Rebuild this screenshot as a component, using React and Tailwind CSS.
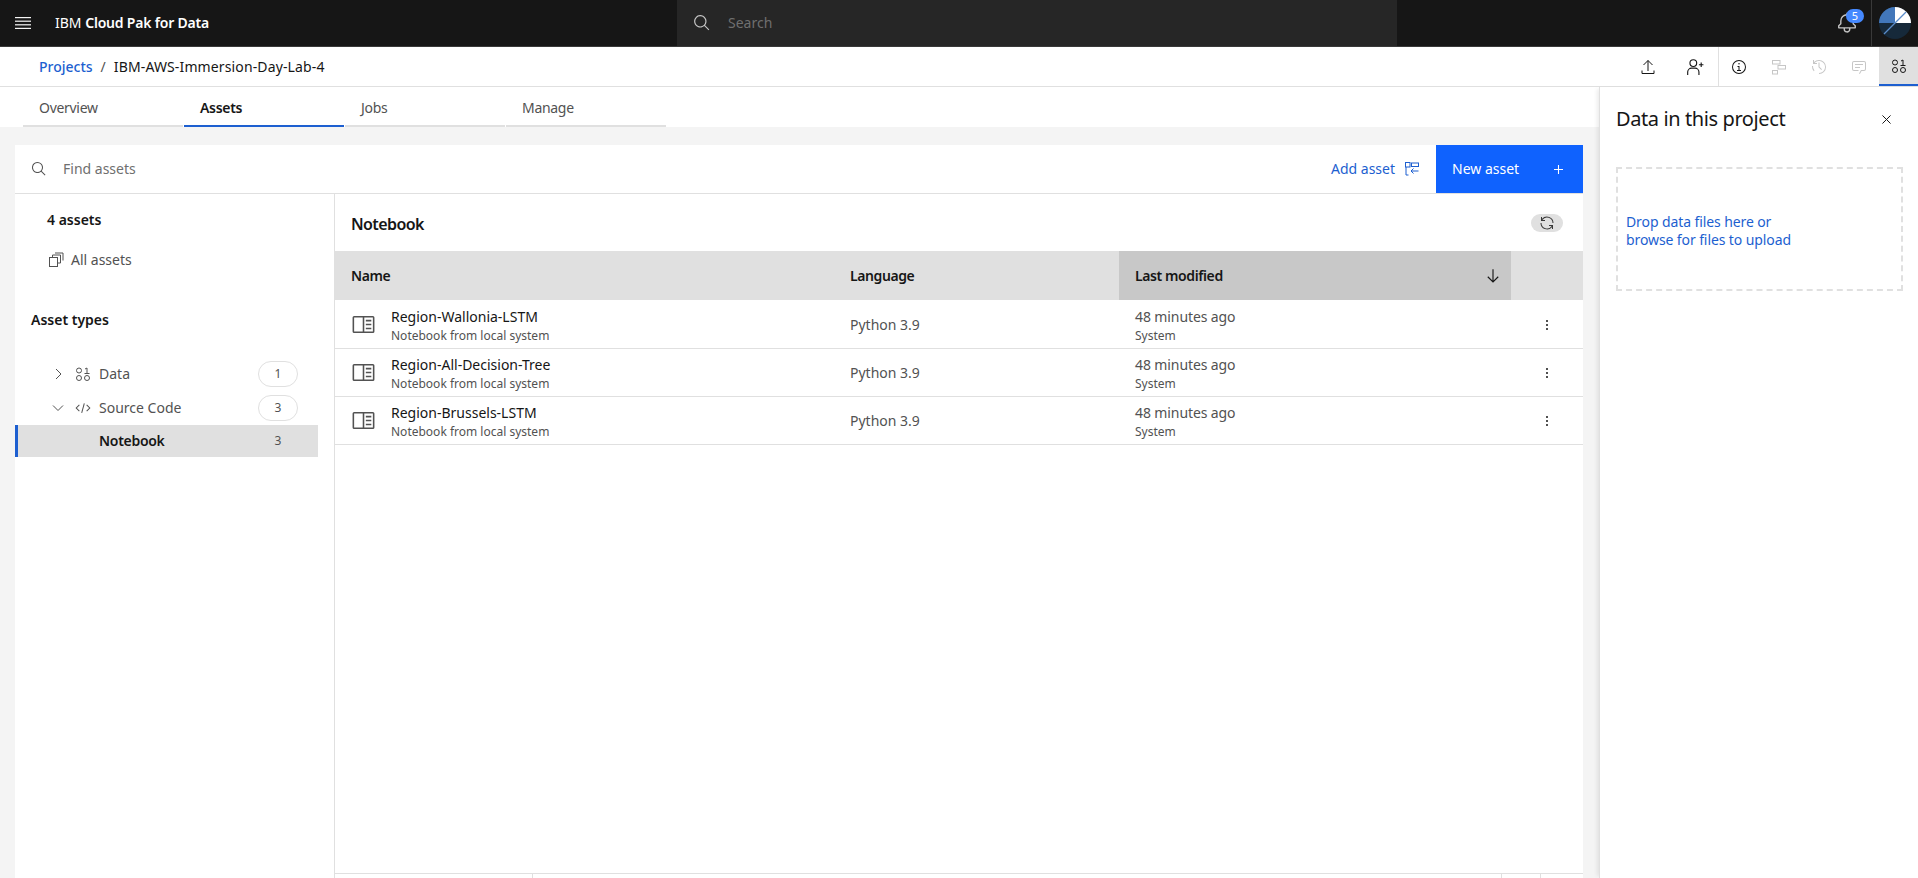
import React from "react";

const Ic = ({ className = "w-4 h-4", children, fill = "currentColor" }) => (
  <svg viewBox="0 0 32 32" fill={fill} className={className}>
    {children}
  </svg>
);

const SearchIcon = ({ className }) => (
  <Ic className={className}>
    <path d="M29 27.5859l-7.5521-7.5521a11.0177 11.0177 0 1 0-1.4141 1.4141L27.5859 29ZM4 13a9 9 0 1 1 9 9 9.01 9.01 0 0 1-9-9Z" />
  </Ic>
);

const DataIcon = ({ className }) => (
  <Ic className={className} fill="none">
    <g stroke="currentColor" strokeWidth="2">
      <circle cx="8" cy="9" r="5" />
      <circle cx="8" cy="24" r="5" />
      <circle cx="24" cy="24" r="5" />
      <path d="M20 6l4-2v12M19 15h10" />
    </g>
  </Ic>
);

const NotebookIcon = () => (
  <Ic className="w-[25px] h-[25px] text-[#525252]">
    <path d="M19 10h7v2h-7zM19 15h7v2h-7zM19 20h7v2h-7z" />
    <path d="M28 5H4a2 2 0 00-2 2V25a2 2 0 002 2H28a2 2 0 002-2V7A2 2 0 0028 5ZM4 7H15V25H4ZM17 25V7H28V25Z" />
  </Ic>
);

const Overflow = () => (
  <Ic className="w-4 h-4 text-[#161616]">
    <circle cx="16" cy="8" r="2" />
    <circle cx="16" cy="16" r="2" />
    <circle cx="16" cy="24" r="2" />
  </Ic>
);

const rows = ["Region-Wallonia-LSTM", "Region-All-Decision-Tree", "Region-Brussels-LSTM"];

const tabs = [
  { label: "Overview" },
  { label: "Assets", active: true },
  { label: "Jobs" },
  { label: "Manage" },
];

const Header = () => (
  <header className="h-[47px] shrink-0 bg-[#161616] border-b border-[#393939] flex items-stretch text-white">
    <div className="w-[677px] flex items-center">
      <svg viewBox="0 0 16 12" className="w-4 h-3 ml-[15px] text-[#f4f4f4]" fill="currentColor">
        <rect y="0" width="16" height="1.2" />
        <rect y="3.6" width="16" height="1.2" />
        <rect y="7.2" width="16" height="1.2" />
        <rect y="10.8" width="16" height="1.2" />
      </svg>
      <div className="ml-6 text-sm">
        IBM <span className="font-semibold tracking-[-0.2px]">Cloud Pak for Data</span>
      </div>
    </div>
    <div className="w-[720px] bg-[#262626] flex items-center pl-4">
      <SearchIcon className="w-[18px] h-[18px] text-[#c6c6c6]" />
      <span className="ml-[17px] text-sm text-[#6f6f6f]">Search</span>
    </div>
    <div className="flex-1 flex justify-end items-stretch">
      <div className="relative w-[44px] mr-[2px] flex items-center justify-center">
        <Ic className="w-[22px] h-[22px] text-[#c6c6c6]">
          <path d="M28.7071,19.293,26,16.5859V13a10.0136,10.0136,0,0,0-9-9.9492V1H15V3.0508A10.0136,10.0136,0,0,0,6,13v3.5859L3.2929,19.293A1,1,0,0,0,3,20v3a1,1,0,0,0,1,1h7v.7768a5.152,5.152,0,0,0,4.5,5.1987A5.0057,5.0057,0,0,0,21,25V24h7a1,1,0,0,0,1-1V20A1,1,0,0,0,28.7071,19.293ZM19,25a3,3,0,0,1-6,0V24h6Zm8-3H5V20.4141L7.707,17.707A1,1,0,0,0,8,17V13a8,8,0,0,1,16,0v4a1,1,0,0,0,.293.707L27,20.4141Z" />
        </Ic>
        <span className="absolute left-[21px] top-[9px] w-[18px] h-[14px] rounded-full bg-[#4589ff] text-[11px] leading-[14px] text-center text-white">
          5
        </span>
      </div>
      <div className="w-[47px] border-l border-[#393939] flex items-center justify-center">
        <svg viewBox="0 0 32 32" className="w-8 h-8">
          <circle cx="16" cy="16" r="16" fill="#16293a" />
          <path d="M16 16V0A16 16 0 0 0 0 16Z" fill="#4277ba" />
          <path d="M16 16V0A16 16 0 0 1 32 16Z" fill="#ffffff" />
          <path d="M5 27L27 5" stroke="#5a8bc9" strokeWidth="1.2" />
        </svg>
      </div>
    </div>
  </header>
);

const TopActions = () => (
  <div className="flex items-stretch">
    <div className="flex items-center">
      <div className="w-[48px] flex justify-center">
        <Ic className="w-4 h-4 text-[#161616]" fill="none">
          <path d="M16 24V3M7 12l9-9 9 9M4 23v6h24v-6" stroke="currentColor" strokeWidth="2" />
        </Ic>
      </div>
      <div className="w-[46px] flex justify-center">
        <Ic className="w-[18px] h-[18px] text-[#161616]" fill="none">
          <g stroke="currentColor" strokeWidth="2">
            <circle cx="13" cy="9" r="6" />
            <path d="M3 30v-5a7 7 0 0 1 7-7h6a7 7 0 0 1 7 7v5M23 12h8M27 8v8" />
          </g>
        </Ic>
      </div>
    </div>
    <div className="border-l border-[#e0e0e0] flex items-stretch">
      <div className="w-[40px] flex items-center justify-center">
        <Ic className="w-4 h-4 text-[#161616]">
          <path d="M17 22v-8h-4v2h2v6h-3v2h8v-2h-3z" />
          <path d="M16 8a1.5 1.5 0 101.5 1.5A1.5 1.5 0 0016 8z" />
          <path d="M16 30A14 14 0 1130 16 14 14 0 0116 30zM16 4A12 12 0 1028 16 12 12 0 0016 4z" />
        </Ic>
      </div>
      <div className="w-[40px] flex items-center justify-center">
        <Ic className="w-4 h-4 text-[#c6c6c6]" fill="none">
          <g stroke="currentColor" strokeWidth="2">
            <rect x="3" y="3" width="15" height="7" />
            <rect x="14" y="13" width="15" height="7" />
            <rect x="3" y="23" width="10" height="7" />
          </g>
        </Ic>
      </div>
      <div className="w-[40px] flex items-center justify-center">
        <Ic className="w-4 h-4 text-[#c6c6c6]">
          <path d="M20.59 22L15 16.41V7h2v8.58l5 5.01L20.59 22z" />
          <path d="M16 2A13.94 13.94 0 006 6.23V2H4v8h8V8H7.08A12 12 0 1116 28v2A14 14 0 0016 2z" />
          <path d="M2 14h2a12 12 0 003 9l-1.5 1.3A14 14 0 012 14z" />
        </Ic>
      </div>
      <div className="w-[40px] flex items-center justify-center">
        <Ic className="w-4 h-4 text-[#c6c6c6]">
          <path d="M17.74 30L16 29l4-7h6a2 2 0 002-2V8a2 2 0 00-2-2H6A2 2 0 004 8V20a2 2 0 002 2h9v2H6a4 4 0 01-4-4V8A4 4 0 016 4H26a4 4 0 014 4V20a4 4 0 01-4 4H21.16z" />
          <path d="M8 10H24V12H8zM8 16H18V18H8z" />
        </Ic>
      </div>
      <div className="w-[39px] bg-[#e0e0e0] border-b-2 border-[#1d5fd0] flex items-center justify-center">
        <DataIcon className="w-4 h-4 text-[#161616]" />
      </div>
    </div>
  </div>
);

const Breadcrumb = () => (
  <div className="h-[40px] shrink-0 bg-white border-b border-[#e0e0e0] flex items-stretch justify-between pl-[39px]">
    <div className="flex items-center text-sm">
      <span className="text-[#1d5fd0] font-medium">Projects</span>
      <span className="mx-[8px] text-[#525252]">/</span>
      <span className="text-[#161616] tracking-[0.13px]">IBM-AWS-Immersion-Day-Lab-4</span>
    </div>
    <TopActions />
  </div>
);

const Tabs = () => (
  <div className="h-[40px] shrink-0 bg-white pl-[23px] flex gap-[1px]">
    {tabs.map((t) => (
      <div
        key={t.label}
        className={`w-[160px] pl-4 pt-[11px] text-sm tracking-[-0.3px] border-b-2 ${
          t.active ? "border-[#1d5fd0] font-semibold text-[#161616]" : "border-[#e0e0e0] text-[#525252]"
        }`}
      >
        {t.label}
      </div>
    ))}
  </div>
);

const Toolbar = () => (
  <div className="h-[49px] shrink-0 border-b border-[#e0e0e0] flex items-stretch">
    <div className="flex-1 flex items-center pl-4">
      <SearchIcon className="w-4 h-4 text-[#525252]" />
      <span className="ml-4 text-sm text-[#6f6f6f]">Find assets</span>
    </div>
    <div className="flex items-center text-sm text-[#1d5fd0] pr-[16px]">
      <span>Add asset</span>
      <Ic className="w-4 h-4 ml-[9px]" fill="none">
        <g stroke="currentColor" strokeWidth="2">
          <rect x="3" y="3" width="9" height="9" />
          <rect x="15" y="4" width="14" height="7" />
          <path d="M4 12v16h5M29 20H14M19 15l-5 5 5 5" />
        </g>
      </Ic>
    </div>
    <div className="w-[147px] h-[48px] bg-[#0f62fe] text-white text-sm flex items-center justify-between pl-4 pr-[20px]">
      <span>New asset</span>
      <svg viewBox="0 0 10 10" className="w-[9px] h-[9px]" stroke="currentColor" strokeWidth="1.2">
        <path d="M5 0v10M0 5h10" />
      </svg>
    </div>
  </div>
);

const Pill = ({ n }) => (
  <span className="w-[40px] h-[26px] rounded-full border border-[#e0e0e0] flex items-center justify-center text-xs text-[#525252]">
    {n}
  </span>
);

const Sidebar = () => (
  <aside className="w-[320px] shrink-0 border-r border-[#e0e0e0] pt-[17px]">
    <div className="pl-[32px] text-sm font-semibold text-[#161616] leading-[18px]">4 assets</div>
    <div className="pl-[33px] mt-[21px] h-5 flex items-center text-sm text-[#525252]">
      <Ic className="w-[16px] h-[16px] text-[#525252]" fill="none">
        <g stroke="currentColor" strokeWidth="2">
          <rect x="3" y="11" width="16" height="18" />
          <path d="M9 11V6h16v16h-6M14 2h16v15" />
        </g>
      </Ic>
      <span className="ml-[7px]">All assets</span>
    </div>
    <div className="pl-[16px] mt-[41px] text-sm font-semibold text-[#161616] leading-[18px]">Asset types</div>
    <div className="mt-[32px] w-[303px]">
      <div className="h-[26px] mb-[8px] flex items-center pl-[35px] pr-[20px] text-sm text-[#525252]">
        <svg viewBox="0 0 16 16" className="w-4 h-4" fill="none" stroke="currentColor">
          <path d="M6 3l5 5-5 5" />
        </svg>
        <DataIcon className="w-4 h-4 ml-[9px]" />
        <span className="ml-[8px] flex-1">Data</span>
        <Pill n={1} />
      </div>
      <div className="h-[26px] flex items-center pl-[35px] pr-[20px] text-sm text-[#525252]">
        <svg viewBox="0 0 16 16" className="w-4 h-4" fill="none" stroke="currentColor">
          <path d="M3 5.5l5 5 5-5" />
        </svg>
        <Ic className="w-4 h-4 ml-[9px]">
          <path d="M31 16 24 23 22.59 21.59 28.17 16 22.59 10.41 24 9 31 16z" />
          <path d="M1 16 8 9 9.41 10.41 3.83 16 9.41 21.59 8 23 1 16z" />
          <path d="M12.419 25.484 17.639 6.552 19.569 7.083 14.349 26.015 12.419 25.484z" />
        </Ic>
        <span className="ml-[8px] flex-1">Source Code</span>
        <Pill n={3} />
      </div>
      <div className="mt-[4px] h-[32px] bg-[#e0e0e0] border-l-[3px] border-[#1d5fd0] flex items-center pl-[81px] pr-[20px]">
        <span className="flex-1 text-sm font-semibold tracking-[-0.3px] text-[#161616]">Notebook</span>
        <span className="w-[40px] text-center text-xs text-[#525252]">3</span>
      </div>
    </div>
  </aside>
);

const AssetRow = ({ name }) => (
  <div className="h-[48px] border-b border-[#e0e0e0] flex items-center">
    <div className="w-[515px] pl-4 flex items-center">
      <NotebookIcon />
      <div className="ml-[15px] pt-px leading-[19px]">
        <div className="text-sm text-[#161616]">{name}</div>
        <div className="text-xs text-[#525252] mt-px">Notebook from local system</div>
      </div>
    </div>
    <div className="w-[285px] text-sm text-[#525252]">Python 3.9</div>
    <div className="w-[392px] pt-px leading-[19px]">
      <div className="text-sm text-[#525252] tracking-[-0.1px]">48 minutes ago</div>
      <div className="text-xs text-[#525252] mt-px">System</div>
    </div>
    <div className="w-[40px] flex justify-center">
      <Overflow />
    </div>
  </div>
);

const AssetTable = () => (
  <div className="flex-1 flex flex-col min-w-0">
    <div className="h-[57px] shrink-0 flex items-center justify-between pl-4 pr-5">
      <h2 className="mt-[2px] text-base font-semibold tracking-[-0.6px] text-[#161616]">Notebook</h2>
      <div className="w-8 h-[18px] rounded-full bg-[#e0e0e0] flex items-center justify-center">
        <Ic className="w-4 h-4 text-[#393939]">
          <path d="M12 10H6.78A11 11 0 0127 16h2A13 13 0 006 7.68V4H4v8h8zM20 22h5.22A11 11 0 015 16H3a13 13 0 0023 8.32V28h2V20H20z" />
        </Ic>
      </div>
    </div>
    <div className="h-[49px] shrink-0 bg-[#e0e0e0] flex items-stretch text-sm font-semibold tracking-[-0.4px] text-[#161616]">
      <div className="w-[515px] pl-4 flex items-center">Name</div>
      <div className="w-[269px] flex items-center">Language</div>
      <div className="w-[392px] bg-[#c8c8c8] pl-4 pr-[9px] flex items-center justify-between">
        Last modified
        <Ic className="w-[18px] h-[18px]">
          <path d="M24.59 16.59L17 24.17 17 4 15 4 15 24.17 7.41 16.59 6 18 16 28 26 18 24.59 16.59z" />
        </Ic>
      </div>
    </div>
    <div className="mt-px">
      {rows.map((r) => (
        <AssetRow key={r} name={r} />
      ))}
    </div>
    <div className="flex-1" />
    <div className="h-[5px] shrink-0 border-t border-[#e0e0e0] flex">
      <div className="w-[198px] border-r border-[#e0e0e0]" />
      <div className="flex-1 border-r border-[#e0e0e0]" />
      <div className="w-[39px] border-r border-[#e0e0e0]" />
      <div className="w-[42px]" />
    </div>
  </div>
);

const SidePanel = () => (
  <aside className="w-[319px] shrink-0 bg-white border-l border-[#e0e0e0] shadow-[-4px_0_4px_-2px_rgba(0,0,0,0.08)] pl-[16px] pr-[15px] pt-[19px]">
    <div className="flex items-center justify-between h-[26px] pr-[12px]">
      <h3 className="text-xl tracking-[-0.4px] text-[#161616]">Data in this project</h3>
      <svg viewBox="0 0 10 10" className="w-[9px] h-[9px] text-[#161616]" stroke="currentColor" strokeWidth="1.1">
        <path d="M0.5 0.5l9 9M9.5 0.5l-9 9" />
      </svg>
    </div>
    <div className="mt-[35px] h-[124px] border-2 border-dashed border-[#e0e0e0] flex items-center pl-[8px] pt-[3px] text-sm leading-[18px] tracking-[-0.1px] text-[#1d5fd0]">
      <div>
        Drop data files here or
        <br />
        browse for files to upload
      </div>
    </div>
  </aside>
);

export default function App() {
  return (
    <div className="h-screen w-full overflow-hidden flex flex-col bg-white font-['Noto_Sans',sans-serif]">
      <Header />
      <Breadcrumb />
      <div className="flex-1 flex min-h-0">
        <main className="flex-1 flex flex-col min-w-0">
          <Tabs />
          <div className="flex-1 min-h-0 bg-[#f4f4f4] pl-[15px] pr-[16px] pt-[18px]">
            <div className="h-full bg-white flex flex-col">
              <Toolbar />
              <div className="flex-1 flex min-h-0">
                <Sidebar />
                <AssetTable />
              </div>
            </div>
          </div>
        </main>
        <SidePanel />
      </div>
    </div>
  );
}
